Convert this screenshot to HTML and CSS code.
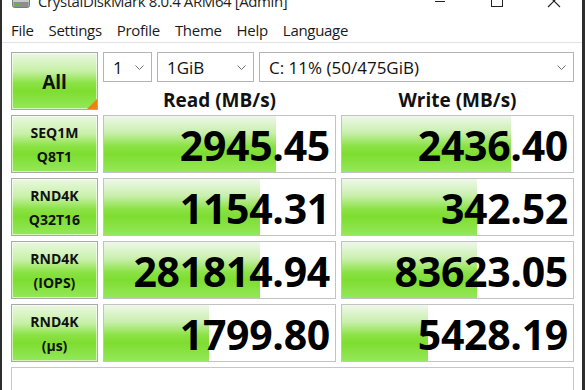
FILE: index.html
```html
<!DOCTYPE html>
<html lang="en">
<head>
  <meta charset="UTF-8">
  <meta name="viewport" content="width=device-width, initial-scale=1.0">
  <title>CrystalDiskMark 8.0.4 ARM64 [Admin]</title>
  <link rel="stylesheet" href="styles.css">
</head>
<body>
  <div class="window">
    <div class="titlebar">
      <div class="titlebar-inner">
        <span class="app-icon">
          <svg width="18" height="14" viewBox="0 0 18 14">
            <rect x="0.5" y="0.5" width="17" height="13" rx="2" fill="#c9c9c9" stroke="#7a7a7a"/>
            <rect x="1.5" y="8" width="15" height="5" fill="#8d8d8d"/>
            <rect x="2.5" y="9" width="5" height="3" fill="#56c41c"/>
          </svg>
        </span>
        <span class="title">CrystalDiskMark 8.0.4 ARM64 [Admin]</span>
        <div class="caption-buttons">
          <span class="caption-button">
            <svg width="12" height="12" viewBox="0 0 12 12"><line x1="1" y1="6.5" x2="11" y2="6.5" stroke="#222" stroke-width="1"/></svg>
          </span>
          <span class="caption-button">
            <svg width="12" height="12" viewBox="0 0 12 12"><rect x="0.5" y="0.5" width="11" height="11" fill="none" stroke="#222" stroke-width="1"/></svg>
          </span>
          <span class="caption-button">
            <svg width="14" height="14" viewBox="0 0 14 14"><path d="M1 1 L13 13 M13 1 L1 13" stroke="#222" stroke-width="1.1"/></svg>
          </span>
        </div>
      </div>
    </div>

    <div class="menubar">
      <span class="menu-item">File</span>
      <span class="menu-item">Settings</span>
      <span class="menu-item">Profile</span>
      <span class="menu-item">Theme</span>
      <span class="menu-item">Help</span>
      <span class="menu-item">Language</span>
    </div>

    <div class="main">
      <div class="bench-grid">
        <div class="all-button">All</div>

        <div class="top-controls">
          <div class="select-row">
            <div class="select select-count">
              <span>1</span>
              <svg class="chevron" width="9" height="5" viewBox="0 0 9 5"><polyline points="0.5,0.5 4.5,4.5 8.5,0.5" fill="none" stroke="#707070"/></svg>
            </div>
            <div class="select select-size">
              <span>1GiB</span>
              <svg class="chevron" width="9" height="5" viewBox="0 0 9 5"><polyline points="0.5,0.5 4.5,4.5 8.5,0.5" fill="none" stroke="#707070"/></svg>
            </div>
            <div class="select select-drive">
              <span>C: 11% (50/475GiB)</span>
              <svg class="chevron" width="9" height="5" viewBox="0 0 9 5"><polyline points="0.5,0.5 4.5,4.5 8.5,0.5" fill="none" stroke="#707070"/></svg>
            </div>
          </div>
          <div class="column-headers">
            <div class="column-header">Read (MB/s)</div>
            <div class="column-header">Write (MB/s)</div>
          </div>
        </div>

        <!-- SEQ1M Q8T1 -->
        <div class="test-button">SEQ1M<br>Q8T1</div>
        <div class="result" style="--bar: 172px"><span class="value">2945.45</span></div>
        <div class="result" style="--bar: 169px"><span class="value">2436.40</span></div>

        <!-- RND4K Q32T16 -->
        <div class="test-button">RND4K<br>Q32T16</div>
        <div class="result" style="--bar: 156px"><span class="value">1154.31</span></div>
        <div class="result" style="--bar: 135px"><span class="value">342.52</span></div>

        <!-- RND4K IOPS -->
        <div class="test-button">RND4K<br>(IOPS)</div>
        <div class="result" style="--bar: 156px"><span class="value">281814.94</span></div>
        <div class="result" style="--bar: 135px"><span class="value">83623.05</span></div>

        <!-- RND4K latency -->
        <div class="test-button">RND4K<br>(µs)</div>
        <div class="result" style="--bar: 105px"><span class="value">1799.80</span></div>
        <div class="result" style="--bar: 86px"><span class="value">5428.19</span></div>

        <div class="comment"></div>
      </div>
    </div>
  </div>
</body>
</html>
```

FILE: styles.css
```css
* {
  box-sizing: border-box;
}

body {
  margin: 0;
  background: #ffffff;
  font-family: "Open Sans", "Noto Sans", sans-serif;
  color: #1a1a1a;
}

.window {
  width: 585px;
  height: 390px;
  overflow: hidden;
  border-left: 2px solid #2e2e2e;
  border-right: 3px solid #2e2e2e;
  background: #ffffff;
}

/* title bar - only the lower part is visible */
.titlebar {
  height: 14px;
  overflow: hidden;
}

.titlebar-inner {
  height: 40px;
  margin-top: -19px;
  display: flex;
  align-items: center;
  padding-left: 10px;
}

.app-icon {
  display: flex;
  margin-right: 8px;
}

.title {
  font-size: 15px;
  letter-spacing: -0.4px;
  color: #1f1f1f;
  white-space: nowrap;
}

.caption-buttons {
  margin-left: auto;
  display: flex;
  height: 100%;
}

.caption-button {
  width: 57px;
  display: flex;
  align-items: center;
  justify-content: center;
}

/* menu */
.menubar {
  height: 29px;
  padding: 6px 0 0 9px;
  display: flex;
  gap: 15px;
  border-bottom: 1px solid #e3e3e3;
}

.menu-item {
  font-size: 15px;
  letter-spacing: -0.3px;
  line-height: 20px;
  color: #1a1a1a;
}

/* benchmark area */
.main {
  padding: 9px 8px 0 9px;
}

.bench-grid {
  display: grid;
  grid-template-columns: 87px 233px 233px;
  grid-template-rows: repeat(5, 58px) 40px;
  gap: 5px;
}

.all-button,
.test-button {
  background: linear-gradient(#e9f8e0 0%, #c8f0a8 32%, #8ae244 54%, #7edd30 68%, #93e85a 100%);
  border: 1px solid #a9a9a9;
  box-shadow: inset 0 0 0 1px rgba(255, 255, 255, 0.6);
  display: flex;
  align-items: center;
  justify-content: center;
  text-align: center;
  font-weight: 700;
  color: #111111;
}

.all-button {
  position: relative;
  font-size: 19px;
  padding-top: 2px;
}

/* orange corner mark */
.all-button::after {
  content: '';
  position: absolute;
  right: 0;
  bottom: 0;
  border-style: solid;
  border-width: 0 0 10px 10px;
  border-color: transparent transparent #f08214 transparent;
}

.test-button {
  font-size: 14px;
  line-height: 24px;
  padding-top: 2px;
}

.top-controls {
  grid-column: 2 / 4;
  display: flex;
  flex-direction: column;
}

.select-row {
  display: flex;
  gap: 5px;
  height: 30px;
}

.select {
  height: 30px;
  border: 1px solid #b4b4b4;
  background: #ffffff;
  display: flex;
  align-items: center;
  justify-content: space-between;
  padding: 0 7px 0 9px;
  font-size: 17px;
  color: #111111;
}

.select-count {
  width: 49px;
}

.select-size {
  width: 97px;
}

.select-drive {
  flex: 1;
}

.column-headers {
  flex: 1;
  display: grid;
  grid-template-columns: 233px 233px;
  column-gap: 5px;
  align-items: end;
}

.column-header {
  text-align: center;
  font-size: 19px;
  font-weight: 700;
  line-height: 20px;
  color: #111111;
}

.result {
  border: 1px solid #c3c3c3;
  background: linear-gradient(#eef8ea 0%, #c9efad 30%, #8ae244 54%, #7edd30 68%, #94e85a 100%) no-repeat, #ffffff;
  background-size: var(--bar) 100%;
  display: flex;
  align-items: center;
  justify-content: flex-end;
  padding: 2px 5px 0 0;
}

.value {
  font-size: 41px;
  font-weight: 700;
  color: #000000;
  line-height: 1;
  letter-spacing: -0.3px;
}

.comment {
  grid-column: 1 / 4;
  border: 1px solid #c6c6c6;
  background: #ffffff;
}
```
